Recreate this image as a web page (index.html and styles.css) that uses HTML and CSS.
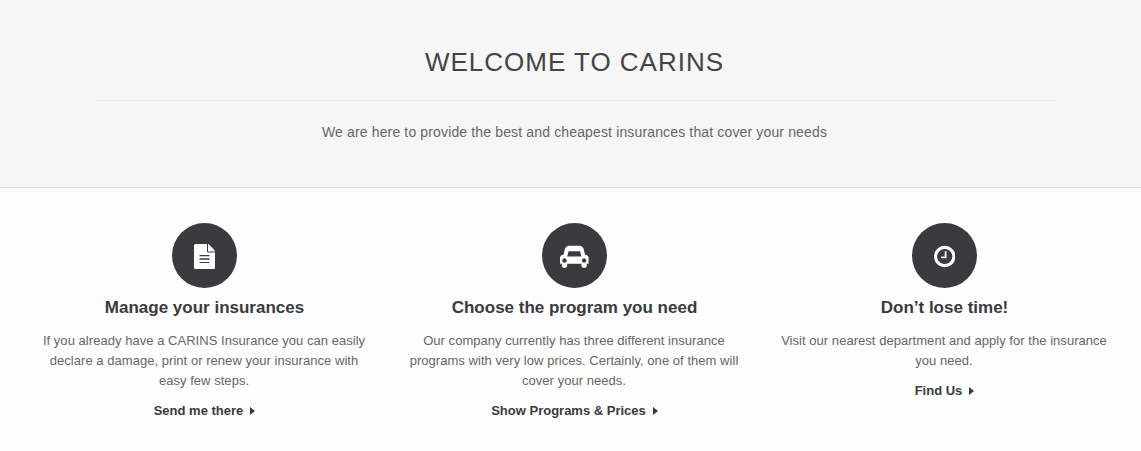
FILE: index.html
```html
<!DOCTYPE html>
<html lang="en">
<head>
<meta charset="utf-8">
<title>CARINS</title>
<link rel="stylesheet" href="styles.css">
</head>
<body>
<header class="intro">
  <h1 class="intro-title">WELCOME TO CARINS</h1>
  <p class="intro-text">We are here to provide the best and cheapest insurances that cover your needs</p>
</header>
<main class="features">
  <section class="feature">
    <span class="badge"><svg class="icon" viewBox="0 0 21 25" width="21" height="25"><path fill-rule="evenodd" d="M1.500 0H13V7.200Q13 8.500 14.300 8.500H21V23.500Q21 25 19.500 25H1.500Q0 25 0 23.500V1.500Q0 0 1.500 0ZM14 0Q14.800 .200 15.300 .800L20.300 6Q20.800 6.600 21 7.500H14ZM5.500 11H15.500V12.200H5.500ZM5.500 14.300H15.500V15.700H5.500ZM5.500 17.900H15.500V19.100H5.500Z"/></svg></span>
    <h2 class="feature-title">Manage your insurances</h2>
    <p class="feature-text">If you already have a CARINS Insurance you can easily declare a damage, print or renew your insurance with easy few steps.</p>
    <a class="more">Send me there</a>
  </section>
  <section class="feature">
    <span class="badge"><svg class="icon" viewBox="0 -1536 2048 1792" width="28.600" height="25"><path transform="scale(1 -1)" d="M480 352q0 66 -47 113t-113 47t-113 -47t-47 -113t47 -113t113 -47t113 47t47 113zM516 640h1016l-89 357q-2 8 -14 17.500t-21 9.500h-768q-9 0 -21 -9.500t-14 -17.500zM1888 352q0 66 -47 113t-113 47t-113 -47t-47 -113t47 -113t113 -47t113 47t47 113zM2048 544v-384q0 -14 -9 -23t-23 -9h-96v-128q0 -80 -56 -136t-136 -56t-136 56t-56 136v128h-1024v-128q0 -80 -56 -136t-136 -56t-136 56t-56 136v128h-96q-14 0 -23 9t-9 23v384q0 93 65.500 158.500t158.500 65.500h28l105 419q23 94 104 157.500t179 63.500h768q98 0 179 -63.500t104 -157.500l105 -419h28q93 0 158.500 -65.500t65.500 -158.500z"/></svg></span>
    <h2 class="feature-title">Choose the program you need</h2>
    <p class="feature-text">Our company currently has three different insurance programs with very low prices. Certainly, one of them will cover your needs.</p>
    <a class="more">Show Programs &amp; Prices</a>
  </section>
  <section class="feature">
    <span class="badge"><svg class="icon" viewBox="0 -1536 1536 1792" width="21.430" height="25"><path transform="scale(1 -1)" d="M896 992v-448q0 -14 -9 -23t-23 -9h-320q-14 0 -23 9t-9 23v64q0 14 9 23t23 9h224v352q0 14 9 23t23 9h64q14 0 23 -9t9 -23zM1312 640q0 148 -73 273t-198 198t-273 73t-273 -73t-198 -198t-73 -273t73 -273t198 -198t273 -73t273 73t198 198t73 273zM1536 640q0 -209 -103 -385.500t-279.500 -279.500t-385.500 -103t-385.500 103t-279.500 279.500t-103 385.500t103 385.500t279.500 279.500t385.500 103t385.500 -103t279.500 -279.500t103 -385.500z"/></svg></span>
    <h2 class="feature-title">Don’t lose time!</h2>
    <p class="feature-text">Visit our nearest department and apply for the insurance you need.</p>
    <a class="more">Find Us</a>
  </section>
</main>
</body>
</html>
```
FILE: styles.css
```css
* { box-sizing: border-box; }
body { margin: 0; background: #fdfdfd; font-family: "Liberation Sans", Arial, sans-serif; color: #666; }
.intro { height: 188px; background: #f6f6f6; border-bottom: 1px solid #ddd; padding: 42px 86px 0 95px; text-align: center; }
.intro-title { margin: 0; height: 59px; padding-right: 1px; border-bottom: 1px solid #ececec; font-size: 26px; line-height: 40px; font-weight: 400; letter-spacing: 1px; color: #444; }
.intro-text { margin: 21px 0 0; padding-right: 1px; font-size: 14px; line-height: 20px; letter-spacing: 0.145px; }
.features { display: grid; grid-template-columns: repeat(3, 330px); column-gap: 40px; padding: 35px 0 0 39.5px; }
.feature { display: flex; flex-direction: column; align-items: center; text-align: center; }
.badge { display: flex; align-items: center; justify-content: center; width: 65px; height: 65px; padding-top: 2px; border-radius: 50%; background: #3b3b3f; }
.icon { fill: #fff; }
.feature-title { margin: 8px 0 12px; font-size: 17px; line-height: 23px; color: #3a3a3d; }
.feature-text { margin: 0; padding-right: 1px; font-size: 13px; line-height: 20px; letter-spacing: 0.04px; }
.more { display: flex; align-items: center; margin-top: 10px; font-size: 13px; line-height: 20px; font-weight: 700; color: #3a3a3d; }
.more::after { content: ""; margin-left: 7px; border-left: 5px solid #3a3a3d; border-top: 4px solid transparent; border-bottom: 4px solid transparent; }
```
